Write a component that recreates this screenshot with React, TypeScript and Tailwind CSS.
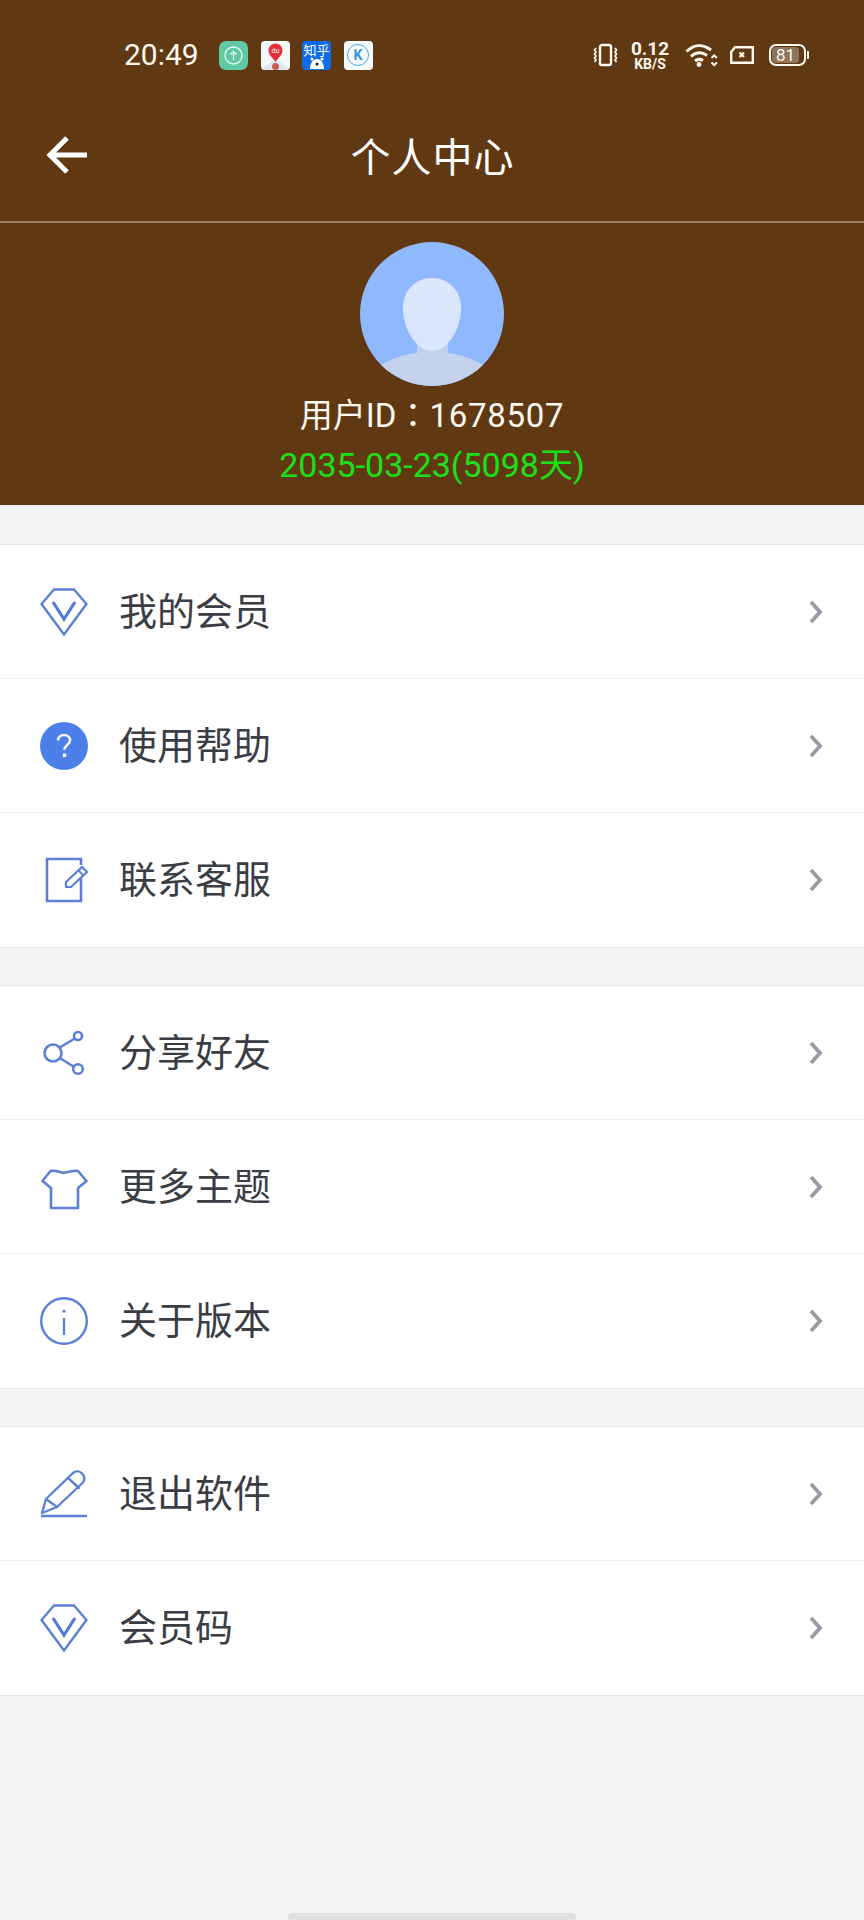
import type { ReactNode } from 'react'

const BLUE = '#5b80d6'

function IconBox({ children }: { children: ReactNode }) {
  return (
    <svg width="48" height="48" viewBox="0 0 48 48" fill="none" stroke={BLUE} strokeWidth="2.4" strokeLinejoin="round" strokeLinecap="round">
      {children}
    </svg>
  )
}

const DiamondIcon = () => (
  <IconBox>
    <path d="M14 1.5H34L46.5 16L24 46.5L1.5 16Z" strokeLinejoin="miter" />
    <path d="M13 14L24 31L35 14" strokeWidth="3.2" strokeLinejoin="miter" stroke="#5278d8" strokeLinecap="butt" />
  </IconBox>
)

const HelpIcon = () => (
  <svg width="48" height="48" viewBox="0 0 48 48">
    <circle cx="24" cy="24" r="24" fill="#4d7fe8" />
    <path d="M18 18.5c0-3.500 2.700-5.500 6-5.500 3.500 0 6 2.200 6 5.300 0 2.400-1.400 3.600-3 4.900-1.700 1.400-2.600 2.300-2.600 4.600" fill="none" stroke="#f4f7fe" strokeWidth="2.600" strokeLinecap="butt" />
    <rect x="22.800" y="31.500" width="3.400" height="3.600" fill="#f4f7fe" />
  </svg>
)

const EditIcon = () => (
  <IconBox>
    <path d="M41 9V3H7V45H41V21" strokeLinecap="butt" strokeLinejoin="miter" strokeWidth="2.6" />
    <path d="M26 31V26L42 11L47 16L31 31Z" strokeWidth="2.2" />
    <path d="M38.500 14.500L43.500 19.500" strokeWidth="1.800" />
  </IconBox>
)

const ShareIcon = () => (
  <IconBox>
    <circle cx="13" cy="24" r="8.500" strokeWidth="2.600" />
    <circle cx="38" cy="7" r="4" strokeWidth="2.600" />
    <circle cx="38" cy="40" r="4.800" strokeWidth="2.600" />
    <path d="M20.500 18L34 10M20.500 29.500L33.500 37.500" strokeWidth="2.600" />
  </IconBox>
)

const ShirtIcon = () => (
  <IconBox>
    <path d="M10.500 8C14 7 16 8 23.500 10C31 8 34 7 38 8L46.500 18L38 25V45H11V25L2.500 18Z" strokeWidth="2.600" />
  </IconBox>
)

const InfoIcon = () => (
  <IconBox>
    <circle cx="24" cy="24" r="22.800" strokeWidth="2.400" />
    <path d="M24 21V38" strokeWidth="2.400" strokeLinecap="butt" />
    <path d="M24 13V15.500" strokeWidth="3" strokeLinecap="butt" />
  </IconBox>
)

const PenIcon = () => (
  <IconBox>
    <path d="M1 46H47" strokeWidth="2.600" strokeLinecap="butt" />
    <path d="M2 43L6 29L33 3C36 0.500 40 1 42.500 4C45 7 44.500 10.500 42.500 13L17 37Z" />
    <path d="M6 29L17 37M28 8L39 18" />
  </IconBox>
)

const Chevron = () => (
  <svg width="14" height="24" viewBox="0 0 14 24" fill="none" stroke="#979ca4" strokeWidth="3.800" className="shrink-0">
    <path d="M2 2L11 12L2 22" />
  </svg>
)

function MenuRow({ icon, label, last }: { icon: ReactNode; label: string; last?: boolean }) {
  return (
    <div className={`flex h-[134px] items-center bg-white pl-[40px] pr-[41px] ${last ? '' : 'border-b border-[#ebedef]'}`}>
      <div className="flex w-[48px] shrink-0 items-center justify-center">{icon}</div>
      <span className="ml-[31px] flex-1 text-[38px] leading-none text-[#3a3d44]">{label}</span>
      <Chevron />
    </div>
  )
}

function MenuGroup({ children }: { children: ReactNode }) {
  return <div className="border-y border-[#e5e7e9]">{children}</div>
}

function StatusBar() {
  return (
    <div className="flex h-[110px] items-center pl-[124px] pr-[55px] text-white">
      <span className="w-[75px] font-['Roboto',sans-serif] text-[30px] leading-none text-[#fdf8f0]">20:49</span>
      <div className="ml-[20px] flex items-center gap-[12.500px]">
        <div className="flex h-[29px] w-[29px] items-center justify-center rounded-[7px] bg-[#5fc8a4]">
          <svg width="19" height="19" viewBox="0 0 19 19" fill="none" stroke="#e8f8f2" strokeWidth="1.300">
            <circle cx="9.500" cy="9.500" r="8.500" />
            <path d="M9.500 14V5.500M6.500 8.500L9.500 5.500L12.500 8.500" />
          </svg>
        </div>
        <div className="relative h-[29px] w-[29px] overflow-hidden rounded-[4px] bg-[#f6f7f9]">
          <svg width="29" height="29" viewBox="0 0 29 29">
            <path d="M0 29L11 20H18L29 29Z" fill="#dfe6f2" />
            <path d="M14.500 21C11 16 7.500 14 7.500 9.500a7 7 0 0 1 14 0C21.500 14 18 16 14.500 21Z" fill="#e8303a" />
            <circle cx="14.500" cy="25.500" r="3.500" fill="#c9604e" />
            <text x="14.500" y="12" textAnchor="middle" fontSize="7" fill="#fff" fontFamily="Roboto">du</text>
          </svg>
        </div>
        <div className="relative flex h-[29px] w-[29px] flex-col items-center overflow-hidden rounded-[4px] bg-[#0f6ce8]">
          <span className="font-['Noto_Sans_CJK_SC',sans-serif] text-[13px] leading-[17px] text-white">知乎</span>
          <svg width="16" height="12" viewBox="0 0 16 12" className="-mt-[1px]">
            <path d="M1 12C1 6 4 2 8 2s7 4 7 10Z" fill="#fff" />
            <circle cx="3" cy="2" r="1.500" fill="#fff" />
            <circle cx="13" cy="2" r="1.500" fill="#fff" />
            <circle cx="8" cy="7" r="1.500" fill="#123" />
          </svg>
        </div>
        <div className="flex h-[29px] w-[29px] items-center justify-center rounded-[4px] bg-[#f7fafc]">
          <div className="flex h-[22px] w-[22px] items-center justify-center rounded-full border-[1.500px] border-[#4aa8e0] font-['Roboto',sans-serif] text-[14px] font-bold leading-none text-[#2f9ae0]">K</div>
        </div>
      </div>
      <div className="flex-1" />
      <svg width="25" height="24" viewBox="0 0 25 24" fill="none" stroke="#fdf8f0">
        <rect x="7" y="2" width="11" height="20" rx="2" strokeWidth="2.400" />
        <path d="M3 5l-1.500 2 1.500 2-1.500 2 1.500 2-1.500 2 1.500 2-1.500 2M22 5l1.500 2-1.500 2 1.500 2-1.500 2 1.500 2-1.500 2 1.500 2" strokeWidth="1.700" />
      </svg>
      <div className="ml-[13px] flex w-[38px] flex-col items-center font-['Roboto',sans-serif] font-bold text-[#fdf8f0]">
        <span className="text-[19px] leading-[17px]">0.12</span>
        <span className="text-[14px] leading-[14px]">KB/S</span>
      </div>
      <svg width="33" height="24" viewBox="0 0 33 24" fill="none" stroke="#fdf8f0" strokeWidth="3" className="ml-[16px]">
        <path d="M1.500 8.500C9 1 18 1 26 7" />
        <path d="M6 13.500C11 9 17 9 22 12.500" />
        <path d="M10 18C12.500 16 15.500 16 18 17.500" />
        <circle cx="14" cy="21.500" r="2.400" fill="#fdf8f0" stroke="none" />
        <path d="M26.500 15l2.700-2.700 2.700 2.700M26.500 19.500l2.700 2.700 2.700-2.700" strokeWidth="2" />
      </svg>
      <svg width="24" height="18" viewBox="0 0 24 18" fill="none" stroke="#fdf8f0" strokeWidth="2.400" className="ml-[12px]">
        <path d="M1.200 16.800V6L5 1.200H22.800V16.800Z" />
        <path d="M9.500 6.500L14 11M14 6.500L9.500 11" strokeWidth="2.200" />
      </svg>
      <div className="ml-[15px] flex items-center">
        <div className="flex h-[22px] w-[37px] items-center justify-start rounded-[7px] border-2 border-[#fdf8f0] p-[1px]">
          <div className="flex h-full w-[27px] items-center justify-center rounded-[4px] bg-[#8d755c] font-['Roboto',sans-serif] text-[17px] leading-none text-[#fdf8f0]">81</div>
        </div>
        <div className="ml-[1px] h-[8px] w-[2px] rounded-r-[1px] bg-[#fdf8f0]" />
      </div>
    </div>
  )
}

function Avatar() {
  return (
    <svg width="144" height="144" viewBox="0 0 144 144">
      <defs>
        <clipPath id="avatar-clip">
          <circle cx="72" cy="72" r="72" />
        </clipPath>
      </defs>
      <g clipPath="url(#avatar-clip)">
        <rect width="144" height="144" fill="#90b8ff" />
        <rect x="57" y="100" width="31" height="20" fill="#bfd0ee" />
        <ellipse cx="72" cy="136" rx="58" ry="26" fill="#c3d3ee" />
        <path d="M72 36c17 0 29 13 29 30 0 22-14 43-29 43S43 88 43 66c0-17 12-30 29-30Z" fill="#d9e6fe" />
      </g>
    </svg>
  )
}

export default function App() {
  return (
    <div className="flex min-h-[1920px] w-[864px] flex-col bg-[#f3f4f6] font-['Roboto','Noto_Sans_CJK_SC',sans-serif]">
      <div className="bg-[#603913]">
        <StatusBar />
        <div className="flex h-[113px] items-center border-b-2 border-[#958068] pb-[22px]">
          <div className="flex w-[136px] pl-[46px]">
            <svg width="42" height="38" viewBox="0 0 42 38" fill="none" stroke="#fff" strokeWidth="5">
              <path d="M41 19H5M21 2L4 19L21 36" />
            </svg>
          </div>
          <span className="flex-1 pr-[135px] text-center font-['Noto_Sans_CJK_SC',sans-serif] text-[40px] leading-none tracking-[1px] text-white">个人中心</span>
        </div>
        <div className="flex h-[282px] flex-col items-center pt-[19px]">
          <Avatar />
          <span className="mt-[3px] text-[33px] leading-[48px] text-[#fdf8f0]">
            用户ID<span className="font-['Noto_Sans_CJK_TC',sans-serif]">：</span>
            <span className="tracking-[0.7px]">1678507</span>
          </span>
          <span className="mt-[1px] text-[34px] leading-[48px] text-[#1ae01a]">2035-03-23(5098天)</span>
        </div>
      </div>

      <div className="mt-[39px]">
        <MenuGroup>
          <MenuRow icon={<DiamondIcon />} label="我的会员" />
          <MenuRow icon={<HelpIcon />} label="使用帮助" />
          <MenuRow icon={<EditIcon />} label="联系客服" last />
        </MenuGroup>
      </div>
      <div className="mt-[37px]">
        <MenuGroup>
          <MenuRow icon={<ShareIcon />} label="分享好友" />
          <MenuRow icon={<ShirtIcon />} label="更多主题" />
          <MenuRow icon={<InfoIcon />} label="关于版本" last />
        </MenuGroup>
      </div>
      <div className="mt-[37px]">
        <MenuGroup>
          <MenuRow icon={<PenIcon />} label="退出软件" />
          <MenuRow icon={<DiamondIcon />} label="会员码" last />
        </MenuGroup>
      </div>

      <div className="mt-auto flex justify-center">
        <div className="h-[7px] w-[288px] rounded-t-[4px] bg-[#e0e1e3]" />
      </div>
    </div>
  )
}
